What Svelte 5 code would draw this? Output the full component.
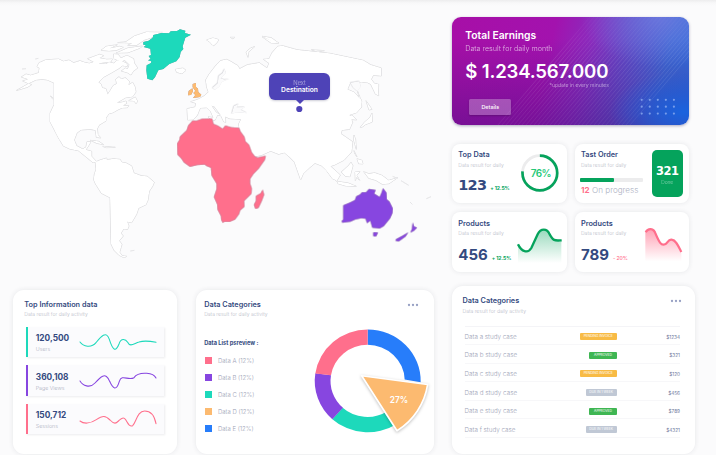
<script>
  const stats = [
    { value: '120,500', label: 'Users', color: '#1dd9bb', path: 'M224 187C234 201 258 206 272 189C286 172 303 151 312 179C322 211 331 219 341 193C347 174 361 178 367 188C374 204 388 190 401 187C417 182 433 184 452 188' },
    { value: '360,108', label: 'Page Views', color: '#8746e0', path: 'M224 187C232 201 254 210 269 193C284 176 301 157 313 188C323 211 333 218 342 188C349 165 369 187 386 177C395 164 410 163 424 164C439 165 449 172 452 178' },
    { value: '150,712', label: 'Sessions', color: '#ff6f8c', path: 'M224 193C235 202 254 202 273 189C293 176 300 177 314 190C330 207 334 197 344 189C366 169 363 216 382 207C393 196 396 163 418 163C437 163 448 180 452 201' }
  ];
  const legend = [
    ['Data A (12%)', '#ff6f8c'],
    ['Data B (12%)', '#8746e0'],
    ['Data C (12%)', '#1dd9bb'],
    ['Data D (12%)', '#fcba70'],
    ['Data E (12%)', '#277dfa']
  ];
  const rows = [
    ['a', 'PENDING INVOICE', 'pending', '$1234'],
    ['b', 'APPROVED', 'approved', '$321'],
    ['c', 'PENDING INVOICE', 'pending', '$120'],
    ['d', 'DUE IN 1 WEEK', 'due', '$456'],
    ['e', 'APPROVED', 'approved', '$789'],
    ['f', 'DUE IN 1 WEEK', 'due', '$4321']
  ];
  const dots = [0, 1, 2].flatMap((r) => [0, 1, 2, 3, 4].map((c) => [c * 8.05 + 189.7, r * 6.9 + 82.8]));
  const stripes = Array.from({ length: 34 }, (_, i) => i);
</script>

<main>
  <div class="left">
    <div class="map">
      <svg width="452" height="290" viewBox="0 0 452 290">
        <g class="land">
          <g transform="scale(.33333)">
            <path d="M48 272L82 262L95 254L80 248L68 243L84 238L64 231L78 222L92 226L116 218L118 204L111 200L117 188L136 180L160 178L176 177L190 184L207 180L221 188L240 182L253 187L268 190L288 184L300 191L318 192L327 186L342 190L350 181L365 183L380 190L382 199L367 197L358 205L334 219L312 231L296 247L303 252L307 263L318 266L323 283L331 271L339 257L350 251L347 238L357 230L364 237L376 233L388 244L386 255L398 247L405 260L408 276L398 290L377 293L350 309L369 306L378 303L380 310L369 317L386 317L382 323L366 324L353 330L339 338L327 341L318 354L318 363L298 375L292 386L294 404L303 414L289 412L286 391L270 388L243 390L231 399L223 420L230 437L248 447L258 441L261 425L273 425L266 437L258 449L275 454L275 469L290 485L279 488L263 475L235 452L209 447L190 438L175 413L163 390L150 365L150 340L162 314L162 249L142 240L127 238L108 240L87 250Z"/>
            <path d="M263 176L299 163L311 167L299 174L320 178L337 177L333 185L304 189L288 190ZM303 151L319 139L352 134L330 145L359 139L370 142L350 151L327 153ZM353 128L378 125L403 108L439 96L487 97L464 110L433 120L410 136L383 136L397 130L373 128ZM349 159L383 144L427 138L421 144L384 158ZM341 162L354 163L363 174L381 166L401 176L403 189L413 204L400 214L393 225L382 218L364 213L376 204L383 207L388 194L374 181L363 185L342 176Z"/>
            <path d="M386 302L406 291L412 303L409 312L402 303ZM526 208L549 204L558 211L546 221L530 217ZM622 120L641 115L656 120L650 129L641 137L630 127ZM151 288L169 302L159 298ZM271 421L296 424L311 434L290 430ZM308 439L346 442L318 443ZM165 392L181 421L172 406ZM66 207L78 206M106 177L115 175M391 753L403 751"/>
          </g>
          <g transform="translate(0 130) scale(.33333)">
            <path d="M286 96L300 90L320 84L321 89L340 86L360 88L366 97L379 99L395 108L402 129L424 137L442 139L463 157L458 169L448 184L444 211L438 224L416 235L410 253L395 278L382 275L387 288L383 298L371 297L363 310L370 318L358 332L366 343L359 367L367 377L381 379L372 383L357 376L342 361L333 342L330 203L304 190L286 161L281 149L283 133L288 118Z"/>
          </g>
          <g transform="translate(130) scale(.33333)">
            <path d="M173 360L171 326L195 321L198 310L182 305L206 297L223 287L235 276L230 262L227 240L237 223L256 198L271 182L289 178L299 182L324 197L329 206L352 194L388 188L411 204L417 190L400 178L417 176L426 158L443 139L458 137L501 149L600 160L700 181L722 194L754 204L754 228L730 226L724 238L733 250L746 253L745 275L746 287L736 282L722 253L713 248L695 246L661 248L653 268L673 277L694 300L695 321L680 338L659 345L668 367L659 388L636 391L633 401L668 425L665 456L642 481L614 495L602 499L631 525L620 544L604 528L589 511L574 497L555 490L538 504L520 521L512 540L493 486L479 472L463 458L446 463L393 442L376 426L370 413L390 430L418 434L438 423L429 450L395 466L370 471L352 442L329 398L326 372L333 358L299 356L286 350L287 367L281 365L271 344L253 320L245 317L258 336L274 347L263 345L254 362L242 335L230 323L211 324L202 346L190 359Z"/>
            <path d="M230 120L248 114L264 118L256 128L247 135L240 125ZM354 172L348 156L361 145L375 139L356 156ZM397 109L424 113L447 130L431 127ZM301 112L315 112L308 116ZM234 350L258 354L248 363ZM391 386L397 386"/>
          </g>
          <g transform="translate(260 20) scale(.33333)">
            <path d="M7 51L56 70L33 69ZM154 89L193 92L174 95ZM292 212L305 245L297 268L301 244ZM318 242L336 268L327 270ZM301 322L313 307L330 292L336 279L337 306L316 314L307 321ZM282 345L287 359L289 388L281 360ZM246 289L258 283L266 290L276 285L290 300L271 298L258 299Z"/>
          </g>
          <g transform="translate(280 140) scale(.33333)">
            <path d="M127 74L151 92L168 120L157 116ZM171 124L205 129L229 139L197 138L174 131ZM184 96L205 77L213 67L219 77L210 110L196 109ZM225 96L240 95L230 106L239 121L230 111L226 122ZM222 32L231 51L224 40ZM231 56L246 61L249 72L236 71ZM251 95L267 101L284 98L306 106L326 121L353 113L327 131L307 133L287 121L266 115ZM338 109L352 115M363 122L386 136M390 186L397 193M439 176L453 170M69 63L76 70L70 74Z"/>
          </g>
        </g>
        <g class="waters" fill="#fbfbfc" transform="translate(130) scale(.33333)">
          <path d="M247 264L263 250L266 228L278 219L283 207L288 220L272 235L284 239L299 237L284 242L275 247L268 260L255 269ZM305 342L312 318L326 312L320 322L346 321L332 329L352 340L339 338L320 337Z"/>
        </g>
        <g class="waters" fill="#fbfbfc" transform="translate(260 20) scale(.33333)">
          <path d="M271 188L298 184L302 200L292 214L280 203Z"/>
        </g>
        <g class="edge">
          <path fill="#1dd9bb" transform="scale(.33333)" d="M430 126L446 122L458 113L460 105L485 99L507 100L512 94L531 93L540 88L556 92L555 99L573 104L556 113L552 126L548 139L550 147L542 156L539 171L529 184L508 192L490 207L475 211L465 232L457 241L442 236L439 211L440 196L453 189L454 184L444 181L452 177L446 168L453 165L451 146L431 141L438 136L430 134Z"/>
          <path fill="#fcba70" transform="scale(.33333)" d="M578 252L588 249L588 261L594 266L595 276L604 284L600 291L579 294L586 285L580 279L586 273L578 262ZM566 273L577 265L579 274L573 285L564 286Z"/>
          <g fill="#ff6f8c" transform="translate(160 105) scale(.33333)">
            <path d="M98 47L109 48L126 42L156 41L160 57L174 63L188 72L196 62L214 67L237 69L241 79L253 96L256 109L267 120L275 142L285 155L293 158L317 153L314 165L296 190L280 207L270 222L270 236L275 250L274 266L252 288L253 305L240 316L237 327L225 343L209 350L192 350L189 354L184 345L183 333L173 314L172 298L162 276L170 252L170 236L155 211L153 188L140 183L134 178L112 180L90 185L72 172L64 160L53 149L52 115L59 104L60 95L80 76L85 61Z"/>
            <path d="M308 254L312 269L305 288L295 309L286 311L282 299L288 288L288 273L302 265Z"/>
          </g>
          <g fill="#8746e0" transform="translate(280 140) scale(.33333)">
            <path d="M190 239L190 196L210 188L225 180L229 169L240 164L246 157L258 157L267 147L287 150L282 161L299 171L305 158L309 145L319 158L320 178L328 185L338 205L337 219L330 235L311 258L299 265L277 263L271 242L261 249L257 236L244 234L226 238L211 245L187 248L185 243ZM280 277L294 278L288 289L280 288ZM398 247L402 260L411 263L402 272L391 278L396 267ZM385 277L376 290L356 304L346 302L349 297L366 288Z"/>
          </g>
        </g>
        <circle cx="299.3" cy="109" r="3.1" fill="#4e43b7"/>
      </svg>
      <div class="tip"><span>Next</span><b>Destination</b></div>
    </div>

    <div class="bottom">
      <section class="card info">
        <h2>Top Information data</h2>
        <p class="sub">Data result for daily activity</p>
        <div class="stats">
          {#each stats as s}
            <div class="stat" style="border-color:{s.color}">
              <div class="fig"><b>{s.value}</b><span>{s.label}</span></div>
              <svg width="78" height="20" viewBox="221 157 234 60"><path d={s.path} fill="none" stroke={s.color} stroke-width="3.2" stroke-linecap="round"/></svg>
            </div>
          {/each}
        </div>
      </section>

      <section class="card cats">
        <div class="list">
          <h2>Data Categories</h2>
          <p class="sub">Data result for daily activity</p>
          <h3>Data List psreview :</h3>
          {#each legend as [name, color]}
            <div class="key"><i style="background:{color}"></i>{name}</div>
          {/each}
        </div>
        <div class="chart">
          <svg class="more" width="12" height="4" viewBox="0 0 12 4" fill="#98a1c4"><circle cx="2" cy="2" r="1.15"/><circle cx="6" cy="2" r="1.15"/><circle cx="10" cy="2" r="1.15"/></svg>
          <svg class="donut" width="120" height="112" viewBox="37 142 360 336">
            <path fill="#277dfa" d="M204 150A159 154.500 0 0 1 363 308L315 300A111 107.500 0 0 0 204 196Z"/>
            <path fill="#1dd9bb" d="M290 434A159 154.500 0 0 1 98 419L129 385A111 107.500 0 0 0 262 396Z"/>
            <path fill="#8746e0" d="M98 419A159 154.500 0 0 1 47 281L94 287A111 107.500 0 0 0 130 385Z"/>
            <path fill="#ff6f8c" d="M47 282A159 154.500 0 0 1 204 150L204 196A111 107.500 0 0 0 94 287Z"/>
            <path class="slice" fill="#fcba70" stroke="#fff" stroke-width="5" stroke-linejoin="round" d="M186 289L384 315A199 199 0 0 1 292 454Z"/>
            <text x="298" y="371" text-anchor="middle">27%</text>
          </svg>
        </div>
      </section>
    </div>
  </div>

  <div class="right">
    <section class="earn">
      <svg class="deco" width="237" height="108" viewBox="0 0 237 108">
        <defs>
          <linearGradient id="fade" x1="0" x2="1" y1="1" y2="0"><stop stop-color="#fff" stop-opacity=".12"/><stop offset=".6" stop-color="#fff" stop-opacity=".2"/><stop offset="1" stop-color="#fff" stop-opacity=".05"/></linearGradient>
        </defs>
        <g stroke="url(#fade)" stroke-width=".5">
          {#each stripes as i}
            <path d="M{46 + i * 4} 108L{138 + i * 4} 0"/>
          {/each}
        </g>
        {#each dots as [x, y]}
          <circle cx={x} cy={y} r="1.1" fill="#8dacf0" opacity=".8"/>
        {/each}
      </svg>
      <div class="etext">
        <h1>Total Earnings</h1>
        <p>Data result for daily month</p>
        <strong>$ 1.234.567.000</strong>
        <small>*update in every minutes</small>
        <button>Details</button>
      </div>
    </section>

    <div class="tiles">
      <section class="card tile">
        <div class="txt">
          <h2>Top Data</h2><p class="sub">Data result for daily</p>
          <div class="num"><b class="slab">123</b><em>+ 12.5%</em></div>
        </div>
        <svg class="ring" width="40" height="40" viewBox="0 0 40 40">
          <circle cx="20" cy="20" r="17.500" fill="none" stroke="#ececed" stroke-width="2.700"/>
          <circle cx="20" cy="20" r="17.500" fill="none" stroke="#05a35c" stroke-width="2.700" stroke-dasharray="83.600 110" transform="rotate(-90 20 20)"/>
          <text x="21" y="23.700" text-anchor="middle">76%</text>
        </svg>
      </section>
      <section class="card tile">
        <div class="txt">
          <h2>Tast Order</h2><p class="sub">Data result for daily</p>
          <div class="bar"><i></i></div>
          <div class="prog"><b>12</b>On progress</div>
        </div>
        <div class="done"><b>321</b><span>Done</span></div>
      </section>
      <section class="card tile">
        <div class="txt">
          <h2>Products</h2><p class="sub">Data result for daily</p>
          <div class="num"><b>456</b><em>+ 12.5%</em></div>
        </div>
        <svg class="spark up" width="46" height="38" viewBox="215 272 138 114">
          <defs><linearGradient id="g1" x1="0" x2="0" y1="0" y2="1"><stop stop-color="#05a35c" stop-opacity=".4"/><stop offset="1" stop-color="#05a35c" stop-opacity="0"/></linearGradient></defs>
          <path fill="url(#g1)" d="M218 328C229 347 247 356 258 338L277 297C286 279 305 281 313 297C325 318 328 316 348 315V383H218Z"/>
          <path fill="none" stroke="#05a35c" stroke-width="7" d="M218 327C229 349 247 356 258 338L277 297C286 278 305 278 313 297C325 318 328 316 349 315"/>
        </svg>
      </section>
      <section class="card tile">
        <div class="txt">
          <h2>Products</h2><p class="sub">Data result for daily</p>
          <div class="num"><b>789</b><em class="down">- 20%</em></div>
        </div>
        <svg class="spark" width="40" height="38" viewBox="600 268 120 114">
          <defs><linearGradient id="g2" x1="0" x2="0" y1="0" y2="1"><stop stop-color="#ff6f8c" stop-opacity=".65"/><stop offset="1" stop-color="#ff6f8c" stop-opacity="0"/></linearGradient></defs>
          <path fill="url(#g2)" d="M604 287C612 273 629 273 635 292C646 317 651 328 663 323C671 320 672 307 683 309C696 310 704 328 712 344V374H604Z"/>
          <path fill="none" stroke="#ff6f8c" stroke-width="6.500" d="M605 287C612 274 629 273 635 292C646 317 651 328 663 323C671 320 672 307 683 309C696 310 704 330 712 346"/>
        </svg>
      </section>
    </div>

    <section class="card table">
      <div class="head">
        <div><h2>Data Categories</h2><p class="sub">Data result for daily activity</p></div>
        <svg class="more" width="12" height="4" viewBox="0 0 12 4" fill="#98a1c4"><circle cx="2" cy="2" r="1.15"/><circle cx="6" cy="2" r="1.15"/><circle cx="10" cy="2" r="1.15"/></svg>
      </div>
      <div class="rows">
        {#each rows as [id, status, kind, price]}
          <div class="row">
            <span class="name">Data {id} study case</span>
            <span class="cell"><span class="tag {kind}">{status}</span></span>
            <span class="price">{price}</span>
          </div>
        {/each}
      </div>
    </section>
  </div>
</main>

<style>
  :global(body) { background: #fbfbfc; overflow: hidden; }
  main {
    width: 716px; height: 455px; overflow: hidden; display: flex; box-sizing: border-box;
    font-family: Inter, "Liberation Sans", sans-serif; color: #344a80;
    background: linear-gradient(#ededee, #f8f8f9 3px, #fbfbfc 6px);
  }
  h1, h2, h3, p { margin: 0; }
  .left { width: 452px; flex: none; }
  .map { position: relative; height: 290px; }
  .map svg { display: block; }
  .land { fill: #fff; stroke: #fff; stroke-width: 1; filter: drop-shadow(.7px .7px .3px #98989e); }
  .waters { filter: drop-shadow(-.5px -.4px .2px #c2c2c8); }
  .edge { filter: drop-shadow(0 0 .5px rgba(90, 60, 90, .6)); }
  .tip {
    position: absolute; left: 269px; top: 73px; width: 61px; height: 27px; border-radius: 6px;
    background: #4e43b7; color: #fff; text-align: center; box-shadow: 0 1px 2px rgba(60, 60, 100, .25);
  }
  .tip::after {
    content: ""; position: absolute; left: 25.500px; bottom: -4px;
    border: 5px solid transparent; border-bottom: 0; border-top-color: #4e43b7;
  }
  .tip span { display: block; font-size: 5.800px; line-height: 7px; padding-top: 5.500px; font-weight: 300; opacity: .6; }
  .tip b { display: block; font-size: 6.700px; line-height: 9px; font-weight: 600; }

  .card { background: #fff; box-shadow: 0 0 5px rgba(40, 45, 70, .1); box-sizing: border-box; }
  h2 { font-size: 7.300px; line-height: 10px; font-weight: 600; white-space: nowrap; }
  .sub { font-size: 5.050px; line-height: 8px; color: #b9bbc8; white-space: nowrap; font-weight: 300; }
  .bottom { display: flex; gap: 19px; padding-left: 13px; }
  .info { width: 164px; height: 164px; border-radius: 11px; padding: 9.500px 13px 0 11.300px; }
  .info .sub, .cats .sub, .table .sub { margin-top: .5px; }
  .stats { display: flex; flex-direction: column; gap: 8px; padding: 9px 0 0 1.700px; }
  .stat {
    display: flex; align-items: center; height: 30.400px; width: 138px; box-sizing: border-box;
    border-left: 2.700px solid; background: #fbfbfd; box-shadow: 1px 1px 2px rgba(40, 45, 70, .09); padding-left: 7.800px;
  }
  .fig { width: 43.200px; padding-top: 2px; }
  .fig b { display: block; font-size: 8.300px; line-height: 11px; font-weight: 700; }
  .fig span { display: block; font-size: 5.300px; line-height: 8px; margin-top: 1px; color: #abafc0; font-weight: 300; }
  .cats { width: 237.500px; height: 164px; border-radius: 11px; padding: 9.500px 5px 0 8.200px; display: flex; justify-content: space-between; }
  h3 { font-size: 5.700px; line-height: 8px; font-weight: 700; margin: 20.500px 0 5.500px; }
  .key { display: flex; align-items: center; height: 17px; gap: 6.300px; padding-left: .5px; font-size: 6px; color: #999eb3; font-weight: 300; }
  .key i { width: 7px; height: 7px; }
  .chart { display: flex; flex-direction: column; align-items: flex-end; }
  .more { display: block; }
  .chart .more { margin: 3.300px 9.500px 0 0; }
  .donut { display: block; margin: 10.700px -3.200px 0 0; overflow: visible; transform: translateY(0); padding-top: 9.800px; }
  .slice { filter: drop-shadow(0 3px 4px rgba(0, 0, 0, .25)); }
  .donut text { font: 600 25px Inter, sans-serif; fill: #fff; }

  .right { padding-top: 17px; width: 243px; }
  .earn {
    width: 237px; height: 108px; border-radius: 9px; overflow: hidden; color: #fff; display: grid;
    box-shadow: 0 1px 3px rgba(30, 20, 80, .35);
    background:
      radial-gradient(ellipse 75px 40px at 98% 88%, #1a63de, rgba(24, 91, 213, 0)),
      radial-gradient(ellipse 80px 50px at 88% 0, rgba(115, 125, 225, .75), rgba(100, 120, 220, 0)),
      linear-gradient(to bottom, rgba(65, 15, 125, 0) 20%, rgba(65, 15, 125, .45)),
      linear-gradient(103deg, #a70fa7 0, #a312ae 40%, #8b2bbd 55%, #6349c6 69%, #3a6bd5 86%, #2f6fdd);
  }
  .deco, .etext { grid-area: 1 / 1; }
  .etext { padding: 11px 0 0 13.300px; display: flex; flex-direction: column; align-items: flex-start; z-index: 1; }
  h1 { font-size: 10.300px; line-height: 14px; font-weight: 600; }
  .earn p { font-size: 7.150px; line-height: 10px; margin-top: 1.500px; font-weight: 300; opacity: .65; }
  .earn strong { font-size: 18.600px; line-height: 22px; font-weight: 600; margin-top: 6.500px; letter-spacing: -.18px; white-space: nowrap; }
  .earn small { font-size: 5.100px; line-height: 7px; width: 143.500px; text-align: right; opacity: .6; font-weight: 300; }
  button {
    margin: 9.500px 0 0 4px; width: 42px; height: 16px; padding: 0; border: 0; border-radius: 1.500px;
    background: rgba(255, 255, 255, .28); color: #fff; font: 500 5.400px Inter, sans-serif; box-shadow: 0 1px 2px rgba(0, 0, 0, .2);
  }
  .tiles { display: grid; grid-template-columns: 114.500px 114.500px; gap: 9px 8.200px; margin-top: 18.500px; }
  .tile { height: 59.500px; border-radius: 8px; padding: 6.800px 5px 0 6.300px; display: flex; justify-content: space-between; }
  .txt { flex: none; width: 62px; }
  .tile .sub { margin-top: .5px; }
  .num { display: flex; align-items: baseline; margin-top: 8.500px; height: 17px; gap: 4px; line-height: 17px; white-space: nowrap; }
  .num b { font-size: 15px; font-weight: 700; }
  .num em { font-size: 5.100px; font-style: normal; font-weight: 700; color: #05a35c; letter-spacing: -.1px; }
  .num em.down { color: #ff6f8c; font-weight: 500; }
  .num .slab { font-family: "DejaVu Sans", sans-serif; font-size: 14.500px; letter-spacing: -.8px; }
  .ring { margin: 3.200px 1.500px 0 0; }
  .ring text { font: 600 10px Inter, sans-serif; fill: #25c877; letter-spacing: -.5px; }
  .bar { width: 63px; height: 4px; margin: 9.500px 0 0 -1px; background: #ececed; border-radius: 1px; }
  .bar i { display: block; width: 34px; height: 4px; background: #05a35c; border-radius: 1px; }
  .prog { font-size: 8.100px; line-height: 11px; margin-top: 2.900px; white-space: nowrap; color: #abafbf; font-weight: 300; display: flex; gap: 2.500px; }
  .prog b { color: #ff6f8c; font-weight: 700; }
  .done { width: 31px; height: 46.500px; border-radius: 5px; background: #05a35c; color: #fff; text-align: center; margin-right: 1.500px; }
  .done b { display: block; font: bold 11.500px/13px "DejaVu Sans", sans-serif; padding-top: 15px; letter-spacing: -.6px; }
  .done span { display: block; font-size: 4.800px; line-height: 6px; font-weight: 300; opacity: .5; margin-top: 1px; }
  .spark { margin-top: 7px; flex: none; }
  .up { margin-right: -.4px; }
  .tile .up { position: relative; left: -3.500px; }
  .table { width: 243px; height: 167.500px; border-radius: 11px; margin-top: 14.500px; padding: 10px 13px 0 10.500px; }
  .head { display: flex; justify-content: space-between; align-items: flex-start; }
  .head .more { margin-top: 3.300px; }
  .rows { margin: 11px 2px 0 2px; border-top: .6px solid #f4f4f7; }
  .row { display: flex; align-items: center; height: 18.600px; box-sizing: border-box; border-bottom: 1px solid #f7f7f9; padding-top: 3px; font-weight: 300; }
  .name { font-size: 6.300px; color: #a0a5b8; width: 100px; }
  .cell { width: 52.200px; display: flex; justify-content: flex-end; }
  .tag { font-size: 3.300px; line-height: 7px; height: 7px; text-align: center; border-radius: 1px; color: #fff; width: 37px; font-weight: 400; white-space: nowrap; }
  .pending { background: #f8bb45; }
  .approved { background: #3fb653; width: 27.500px; }
  .due { background: #c0c8d5; width: 31px; }
  .price { flex: 1; text-align: right; font-size: 4.700px; color: #6b7599; font-weight: 400; }
</style>
